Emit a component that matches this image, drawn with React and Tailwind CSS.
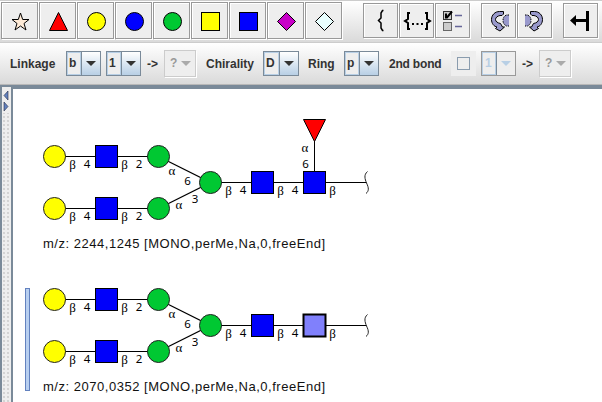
import React from "react";

const BLUE = "#0000fa";
const GREEN = "#00c832";

function ToolButton({ children }) {
  return (
    <button className="flex h-[37px] w-[37px] shrink-0 items-center justify-center border border-[#999] bg-[#eee] shadow-[1px_1px_0_#fff,inset_1px_1px_0_#fff]">
      <svg width="35" height="35" viewBox="-1 0 35 35" className="shrink-0" stroke="#000">
        {children}
      </svg>
    </button>
  );
}

function SmallButton({ children }) {
  return (
    <button className="flex h-[35px] w-[35px] shrink-0 items-center justify-center border border-[#999] bg-[#eee] shadow-[1px_1px_0_#fff,inset_1px_1px_0_#fff]">
      <svg width="33" height="33" viewBox="0 0 33 33" className="shrink-0" stroke="#000">
        {children}
      </svg>
    </button>
  );
}

function Combo({ value, wide }) {
  return (
    <div className={`flex h-[25px] shrink-0 border border-[#7a8a99] ${wide ? "w-9" : "w-[35px]"}`}>
      <div className={`flex h-full items-center border-r border-[#7a8a99] bg-[#eee] pl-px shadow-[inset_0_0_0_1px_#b8cfe5] ${wide ? "w-4" : "w-[15px]"}`}>
        <span className="pl-px">{value}</span>
      </div>
      <div className="flex flex-1 items-center justify-center bg-gradient-to-b from-white to-[#b8cfe5]">
        <svg width="10" height="5"><path d="M0 0H10L5 5Z" fill="#333" /></svg>
      </div>
    </div>
  );
}

function DisabledUnknown() {
  return (
    <div className="flex h-[27px] w-8 shrink-0 items-center border border-[#ccc] bg-[#eee] pl-[5px] text-[#999] shadow-[1px_1px_0_#fff]">
      <span className="w-[11px]">?</span>
      <svg width="10" height="5" className="mt-px shrink-0"><path d="M0 0H10L5 5Z" fill="#aaa" /></svg>
    </div>
  );
}

const RotateArrow = () => (
  <>
    <path d="M27 11H24.500C22 12 21 14 21 16.500S22 20.500 24.500 22H27Z" fill="#9999cc" stroke="none" />
    <path d="M27 11H24.500C22 12 21 14 21 16.500S22 20.500 24.500 22H27" fill="none" strokeDasharray="1.500 1" />
    <path
      d="M21.500 7.500H17.500C13 7.500 9.500 11 9.500 15.500C9.500 19.500 12 22.500 15 23L13.500 24.500L18 27L22.500 23H20.500L18.500 19.500C15.500 19 13.500 17.500 13.500 15.500C13.500 13.500 15.500 12 18 11.500H20L21.500 10Z"
      fill="#9999cc"
    />
  </>
);

function Label({ x, y, children }) {
  const greek = children === "α" || children === "β";
  return (
    <text
      x={x}
      y={y}
      textAnchor="middle"
      className={greek ? "font-['Liberation_Serif',serif] text-[13px]" : "font-['Noto_Sans',sans-serif] text-[11.5px]"}
    >
      {children}
    </text>
  );
}

function Branch({ y }) {
  return (
    <g>
      <path d={`M41.500 ${y}H145.500`} stroke="#000" />
      <circle cx="41.500" cy={y} r="11" fill="#ff0" stroke="#222" />
      <rect x="82.500" y={y - 11} width="22" height="22" fill={BLUE} stroke="#000" />
      <circle cx="145.500" cy={y} r="11" fill={GREEN} stroke="#222" />
      <Label x={59.500} y={y + 12}>β</Label>
      <Label x={74} y={y + 11.500}>4</Label>
      <Label x={111.500} y={y + 12}>β</Label>
      <Label x={126} y={y + 11.500}>2</Label>
    </g>
  );
}

function Structure({ top, mass, fucose, selected }) {
  return (
    <g transform={`translate(0 ${top})`}>
      <path d="M145.500 11.500L197.500 37.500L145.500 63.500" fill="none" stroke="#000" strokeWidth="1.300" />
      <path d="M197.500 37.500H353.500" stroke="#000" />
      <Branch y={11.500} />
      <Branch y={63.500} />
      <circle cx="197.500" cy="37.500" r="11" fill={GREEN} stroke="#222" />
      <rect x="238.500" y="26.500" width="22" height="22" fill={BLUE} stroke="#000" />
      <rect x="290.500" y="26.500" width="22" height="22" fill={selected ? "#8080fc" : BLUE} stroke="#000" strokeWidth={selected ? 2 : 1} />
      <path d="M354.500 26.500C350.500 30 352 34 353.500 38C356 43 356 46 353 48.500" fill="none" stroke="#222" />
      <Label x={159} y={30}>α</Label>
      <Label x={174.500} y={40}>6</Label>
      <Label x={166} y={64}>α</Label>
      <Label x={182} y={58}>3</Label>
      <Label x={215.500} y={49.500}>β</Label>
      <Label x={230} y={49}>4</Label>
      <Label x={267.500} y={49.500}>β</Label>
      <Label x={282} y={49}>4</Label>
      <Label x={319.500} y={49.500}>β</Label>
      {fucose && (
        <>
          <path d="M301.500 -4V26" stroke="#000" />
          <path d="M290.500 -25.500H312.500L301.500 -3.500Z" fill="#f00" stroke="#000" />
          <Label x={292} y={7}>α</Label>
          <Label x={292.500} y={23}>6</Label>
        </>
      )}
      <text x="30" y="103" textLength="282" className="font-['Liberation_Sans',sans-serif] text-[13px]" fill="#111">
        {mass}
      </text>
    </g>
  );
}

export default function App() {
  return (
    <div className="flex h-[402px] w-[602px] flex-col overflow-hidden bg-[#7a8a99] font-['Liberation_Sans',sans-serif] text-[12px] font-bold leading-none text-[#333]">
      <div className="flex h-[43px] shrink-0 border-y border-[#ccc] bg-gradient-to-b from-white to-[#dadada] pl-px pt-px">
        <div className="flex gap-px">
          <ToolButton><path d="M17.500 9L19.700 15.500H26L21 19.500L23 26L17.500 22L12 26L14 19.500L9 15.500H15.300Z" transform="translate(0 1)" fill="#ffebd7" /></ToolButton>
          <ToolButton><path d="M17.500 9.500L26.500 27.500H8.500Z" fill="#f00" /></ToolButton>
          <ToolButton><circle cx="17.500" cy="18.500" r="9" fill="#ff0" /></ToolButton>
          <ToolButton><circle cx="17.500" cy="18.500" r="9" fill="#00f" /></ToolButton>
          <ToolButton><circle cx="17.500" cy="18.500" r="9" fill={GREEN} /></ToolButton>
          <ToolButton><rect x="8.500" y="9.500" width="18" height="18" fill="#ff0" /></ToolButton>
          <ToolButton><rect x="8.500" y="9.500" width="18" height="18" fill="#00f" /></ToolButton>
          <ToolButton><path d="M17.500 9.500L26.500 18.500L17.500 27.500L8.500 18.500Z" fill="#c800c8" /></ToolButton>
          <ToolButton><path d="M17.500 9.500L26.500 18.500L17.500 27.500L8.500 18.500Z" fill="#e9ffff" /></ToolButton>
        </div>
        <div className="ml-[21px] mt-px flex gap-px">
          <SmallButton><path d="M19.500 6.500H18.500L17 9V14L14.500 16.500L17 19V24L18.500 26.500H19.500" fill="none" strokeWidth="1.500" /></SmallButton>
          <SmallButton>
            <path d="M10 9H8V15L5 17L8 19V25H10M25 9H27V15L30 17L27 19V25H25" fill="none" strokeWidth="2" />
            <path d="M12 20H14M16.500 20H18.500M21 20H23" strokeWidth="2" />
          </SmallButton>
          <SmallButton>
            <rect x="7.500" y="7.500" width="8" height="8" fill="#ccc" stroke="#333" />
            <rect x="7.500" y="18.500" width="8" height="8" fill="#ccc" stroke="#666" />
            <path d="M10 9.500V13.500H11L16 7.500" fill="none" strokeWidth="2" />
            <path d="M19 11.500H26M19 22.500H26" stroke="#666699" strokeWidth="1.500" />
          </SmallButton>
        </div>
        <div className="ml-[11px] mt-px flex gap-px">
          <SmallButton><RotateArrow /></SmallButton>
          <SmallButton><g transform="translate(34 0) scale(-1 1)"><RotateArrow /></g></SmallButton>
        </div>
        <div className="ml-[11px] mt-px">
          <SmallButton><path d="M23.500 7V27M24 16.500H10" fill="none" strokeWidth="3" /><path d="M12 11V22L6 16.500Z" fill="#000" stroke="none" /></SmallButton>
        </div>
      </div>

      <div className="flex h-[42px] shrink-0 items-center border-b border-[#b8b8b8] bg-gradient-to-b from-white to-[#dadada] pb-px pl-[10px]">
        <span className="w-14 whitespace-nowrap pt-px">Linkage</span>
        <Combo value="b" />
        <div className="w-[5px]" />
        <Combo value="1" />
        <span className="ml-1.5 w-[17px] pt-px">-&gt;</span>
        <DisabledUnknown />
        <span className="ml-[10px] w-[57px] whitespace-nowrap pt-px">Chirality</span>
        <Combo value="D" wide />
        <span className="ml-[9px] w-[36px] pt-px">Ring</span>
        <Combo value="p" />
        <span className="ml-[10px] w-[62px] whitespace-nowrap pt-px tracking-[-0.2px]">2nd bond</span>
        <div className="flex h-[25px] w-[25px] items-center justify-center bg-[#eee]">
          <div className="h-[13px] w-[13px] border border-[#8a9cae]" />
        </div>
        <div className="ml-[5px] flex h-[25px] w-[35px] border border-[#999] text-[#b8cfe5]">
          <div className="flex w-[15px] items-center border-r border-[#7a8a99] bg-[#eee] pl-[3px] shadow-[inset_0_0_0_1px_#b8cfe5]">1</div>
          <div className="flex flex-1 items-center justify-center bg-[#eee]">
            <svg width="10" height="5"><path d="M0 0H10L5 5Z" fill="#b8cfe5" /></svg>
          </div>
        </div>
        <span className="ml-1.5 w-[17px] pt-px">-&gt;</span>
        <DisabledUnknown />
      </div>

      <div className="flex min-h-0 flex-1 pl-[2px] pt-[2px]">
        <div className="flex w-[9px] flex-col items-center bg-[#eee] bg-[radial-gradient(circle,#999_0.5px,transparent_0.8px)] bg-[size:4px_4px]">
          <svg width="9" height="26" className="bg-[#eee]">
            <path d="M6 4L2 8.500L6 13Z" fill="#6382bf" stroke="#222a44" strokeWidth="0.600" />
            <path d="M2 15L6 19.500L2 24Z" fill="#6382bf" stroke="#222a44" strokeWidth="0.600" />
          </svg>
        </div>
        <div className="ml-[2px] mt-[2px] flex-1 bg-white">
          <svg width="589" height="313" viewBox="0 0 589 313" className="font-normal">
            <rect x="12.500" y="199.500" width="4" height="102" fill="#b8cff0" stroke="#6382bf" />
            <Structure top={56} mass="m/z: 2244,1245 [MONO,perMe,Na,0,freeEnd]" fucose />
            <Structure top={199} mass="m/z: 2070,0352 [MONO,perMe,Na,0,freeEnd]" selected />
          </svg>
        </div>
      </div>
    </div>
  );
}
